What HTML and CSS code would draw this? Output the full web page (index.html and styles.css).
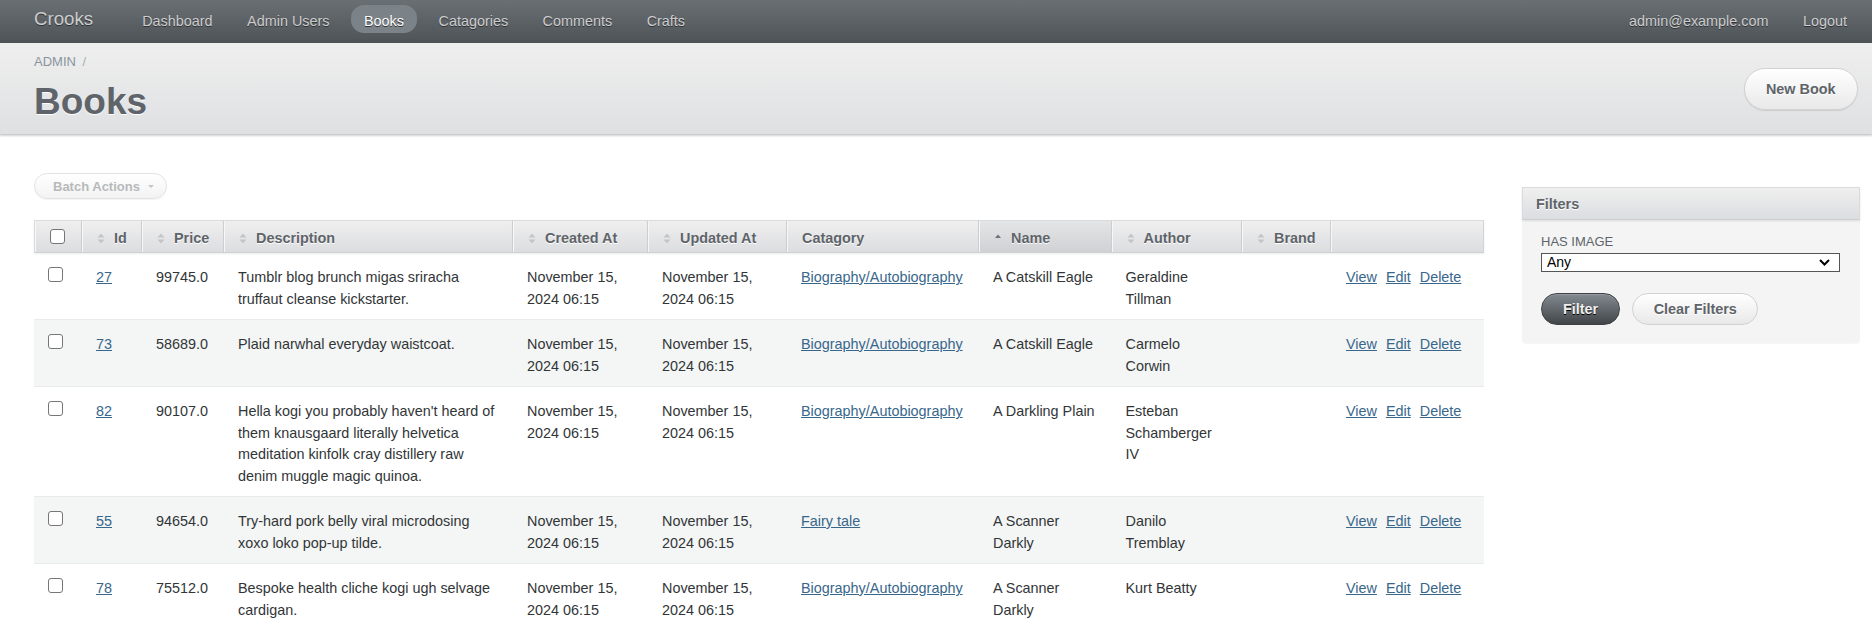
FILE: index.html
```html
<!DOCTYPE html>
<html lang="en">
<head>
<meta charset="utf-8">
<title>Books | Crooks</title>
<link rel="stylesheet" href="styles.css">
</head>
<body>
<div class="header">
  <h1 class="site-title">Crooks</h1>
  <ul class="tabs">
    <li><a href="#">Dashboard</a></li>
    <li><a href="#">Admin Users</a></li>
    <li><a href="#" class="current">Books</a></li>
    <li><a href="#">Catagories</a></li>
    <li><a href="#">Comments</a></li>
    <li><a href="#">Crafts</a></li>
  </ul>
  <ul class="tabs utility">
    <li><a href="#">admin@example.com</a></li>
    <li><a href="#">Logout</a></li>
  </ul>
</div>

<div class="title-bar">
  <div class="titles">
    <div class="breadcrumb">ADMIN <span class="sep">/</span></div>
    <h2 class="page-title">Books</h2>
  </div>
  <a href="#" class="btn new-btn">New Book</a>
</div>

<div class="content">
  <div class="main">
    <div class="batch">Batch Actions <span class="caret"></span></div>
    <table class="index-table">
      <colgroup>
        <col style="width:48px"><col style="width:60px"><col style="width:82px"><col style="width:289px"><col style="width:135px"><col style="width:139px"><col style="width:192px"><col style="width:132.5px"><col style="width:130.5px"><col style="width:89px"><col style="width:153px">
      </colgroup>
      <thead>
        <tr>
          <th class="col-cb"><span class="cb"></span></th>
          <th><span class="sort"><svg width="8" height="11" viewBox="0 0 8 11"><path d="M0.5 4.5 L4 0.5 L7.5 4.5Z M0.5 6.5 L4 10.5 L7.5 6.5Z"/></svg></span>Id</th>
          <th><span class="sort"><svg width="8" height="11" viewBox="0 0 8 11"><path d="M0.5 4.5 L4 0.5 L7.5 4.5Z M0.5 6.5 L4 10.5 L7.5 6.5Z"/></svg></span>Price</th>
          <th><span class="sort"><svg width="8" height="11" viewBox="0 0 8 11"><path d="M0.5 4.5 L4 0.5 L7.5 4.5Z M0.5 6.5 L4 10.5 L7.5 6.5Z"/></svg></span>Description</th>
          <th><span class="sort"><svg width="8" height="11" viewBox="0 0 8 11"><path d="M0.5 4.5 L4 0.5 L7.5 4.5Z M0.5 6.5 L4 10.5 L7.5 6.5Z"/></svg></span>Created At</th>
          <th><span class="sort"><svg width="8" height="11" viewBox="0 0 8 11"><path d="M0.5 4.5 L4 0.5 L7.5 4.5Z M0.5 6.5 L4 10.5 L7.5 6.5Z"/></svg></span>Updated At</th>
          <th>Catagory</th>
          <th class="sorted"><span class="sort asc"><svg width="8" height="11" viewBox="0 0 8 11"><path d="M1 5 L4 1.5 L7 5Z"/></svg></span>Name</th>
          <th><span class="sort"><svg width="8" height="11" viewBox="0 0 8 11"><path d="M0.5 4.5 L4 0.5 L7.5 4.5Z M0.5 6.5 L4 10.5 L7.5 6.5Z"/></svg></span>Author</th>
          <th><span class="sort"><svg width="8" height="11" viewBox="0 0 8 11"><path d="M0.5 4.5 L4 0.5 L7.5 4.5Z M0.5 6.5 L4 10.5 L7.5 6.5Z"/></svg></span>Brand</th>
          <th></th>
        </tr>
      </thead>
      <tbody>
        <tr class="odd">
          <td><span class="cb row-cb"></span></td>
          <td><a href="#">27</a></td>
          <td>99745.0</td>
          <td>Tumblr blog brunch migas sriracha truffaut cleanse kickstarter.</td>
          <td>November 15, 2024 06:15</td>
          <td>November 15, 2024 06:15</td>
          <td><a href="#" class="nowrap">Biography/Autobiography</a></td>
          <td>A Catskill Eagle</td>
          <td>Geraldine Tillman</td>
          <td></td>
          <td><div class="actions"><a href="#">View</a><a href="#">Edit</a><a href="#">Delete</a></div></td>
        </tr>
        <tr class="even">
          <td><span class="cb row-cb"></span></td>
          <td><a href="#">73</a></td>
          <td>58689.0</td>
          <td>Plaid narwhal everyday waistcoat.</td>
          <td>November 15, 2024 06:15</td>
          <td>November 15, 2024 06:15</td>
          <td><a href="#" class="nowrap">Biography/Autobiography</a></td>
          <td>A Catskill Eagle</td>
          <td>Carmelo Corwin</td>
          <td></td>
          <td><div class="actions"><a href="#">View</a><a href="#">Edit</a><a href="#">Delete</a></div></td>
        </tr>
        <tr class="odd">
          <td><span class="cb row-cb"></span></td>
          <td><a href="#">82</a></td>
          <td>90107.0</td>
          <td>Hella kogi you probably haven't heard of them knausgaard literally helvetica meditation kinfolk cray distillery raw denim muggle magic quinoa.</td>
          <td>November 15, 2024 06:15</td>
          <td>November 15, 2024 06:15</td>
          <td><a href="#" class="nowrap">Biography/Autobiography</a></td>
          <td>A Darkling Plain</td>
          <td>Esteban Schamberger IV</td>
          <td></td>
          <td><div class="actions"><a href="#">View</a><a href="#">Edit</a><a href="#">Delete</a></div></td>
        </tr>
        <tr class="even">
          <td><span class="cb row-cb"></span></td>
          <td><a href="#">55</a></td>
          <td>94654.0</td>
          <td>Try-hard pork belly viral microdosing xoxo loko pop-up tilde.</td>
          <td>November 15, 2024 06:15</td>
          <td>November 15, 2024 06:15</td>
          <td><a href="#" class="nowrap">Fairy tale</a></td>
          <td>A Scanner Darkly</td>
          <td>Danilo Tremblay</td>
          <td></td>
          <td><div class="actions"><a href="#">View</a><a href="#">Edit</a><a href="#">Delete</a></div></td>
        </tr>
        <tr class="odd">
          <td><span class="cb row-cb"></span></td>
          <td><a href="#">78</a></td>
          <td>75512.0</td>
          <td>Bespoke health cliche kogi ugh selvage cardigan.</td>
          <td>November 15, 2024 06:15</td>
          <td>November 15, 2024 06:15</td>
          <td><a href="#" class="nowrap">Biography/Autobiography</a></td>
          <td>A Scanner Darkly</td>
          <td>Kurt Beatty</td>
          <td></td>
          <td><div class="actions"><a href="#">View</a><a href="#">Edit</a><a href="#">Delete</a></div></td>
        </tr>
      </tbody>
    </table>
  </div>

  <aside class="sidebar">
    <div class="panel">
      <h3 class="panel-title">Filters</h3>
      <div class="panel-body">
        <label class="filter-label">Has Image</label>
        <div class="select-wrap">
          <select class="select"><option>Any</option></select>
          <svg class="chev" width="11" height="7" viewBox="0 0 11 7"><path d="M1 1 L5.5 5.5 L10 1" fill="none" stroke="#000" stroke-width="2"/></svg>
        </div>
        <div class="buttons">
          <a href="#" class="btn dark-btn">Filter</a>
          <a href="#" class="btn clear-btn">Clear Filters</a>
        </div>
      </div>
    </div>
  </aside>
</div>
</body>
</html>
```

FILE: styles.css
```css
* { box-sizing: border-box; }

html, body {
  margin: 0;
  padding: 0;
}

body {
  font-family: "Liberation Sans", Arial, Helvetica, sans-serif;
  font-size: 14.4px;
  color: #323537;
  background: #ffffff;
}

a { color: #38678b; }

/* ---------- header ---------- */
.header {
  height: 43px;
  display: flex;
  align-items: flex-start;
  padding: 0 12px 0 34px;
  background: linear-gradient(180deg, #6a6f74 0%, #4e5357 100%);
}

.site-title {
  margin: 0 36px 0 0;
  padding-top: 8px;
  font-size: 18.7px;
  line-height: 22px;
  font-weight: normal;
  color: #cdcdcd;
  text-shadow: 0 1px 0 #2f3235;
}

.tabs {
  list-style: none;
  margin: 5px 0 0 0;
  padding: 0;
  display: flex;
  gap: 8.5px;
}

.tabs a {
  display: block;
  height: 28px;
  padding: 5px 13px 0;
  line-height: 23px;
  color: #cdcdcd;
  text-decoration: none;
  border-radius: 13px;
  text-shadow: 0 1px 0 #2f3235;
}

.tabs a.current {
  background: #7b8288;
  color: #ffffff;
}

.utility { margin-left: auto; }

/* ---------- title bar ---------- */
.title-bar {
  height: 92px;
  display: flex;
  align-items: flex-start;
  justify-content: space-between;
  padding: 9.5px 14.5px 0 34px;
  background: linear-gradient(180deg, #efefef 0%, #dfe0e2 100%);
  border-bottom: 1px solid #cdcdcd;
  box-shadow: 0 1px 2px rgba(0, 0, 0, 0.18);
}

.breadcrumb {
  font-size: 13px;
  line-height: 18px;
  color: #8a949e;
}

.breadcrumb .sep { margin-left: 3px; color: #a5adb5; }

.page-title {
  margin: 9.5px 0 0 0;
  font-size: 37px;
  line-height: 44px;
  font-weight: bold;
  color: #5e6469;
  text-shadow: 0 1px 0 #ffffff;
}

.btn {
  display: inline-block;
  text-decoration: none;
  font-weight: bold;
  font-size: 14.4px;
  white-space: nowrap;
}

.new-btn {
  margin-top: 15.5px;
  height: 42px;
  padding: 0 21px;
  line-height: 40px;
  border-radius: 21px;
  color: #5e6469;
  border: 1px solid #d2d2d2;
  background: linear-gradient(180deg, #ffffff 0%, #e9e9e9 100%);
  box-shadow: 0 1px 1px rgba(0, 0, 0, 0.1);
  text-shadow: 0 1px 0 #ffffff;
}

/* ---------- content ---------- */
.content {
  display: flex;
  align-items: flex-start;
  padding: 38px 12px 0 34px;
}

.main { flex: 0 0 1450px; }

.batch {
  display: inline-flex;
  align-items: center;
  height: 26px;
  padding: 0 12px 0 18px;
  border: 1px solid #e3e3e3;
  border-radius: 13px;
  background: linear-gradient(180deg, #ffffff 0%, #f3f3f3 100%);
  box-shadow: 0 1px 1px rgba(0, 0, 0, 0.05);
  font-size: 13px;
  font-weight: bold;
  color: #b7b9bb;
  margin-bottom: 21px;
}

.caret {
  display: inline-block;
  width: 0;
  height: 0;
  margin-left: 8px;
  border-left: 3px solid transparent;
  border-right: 3px solid transparent;
  border-top: 3px solid #c4c6c8;
}

/* ---------- table ---------- */
.index-table {
  width: 1450px;
  table-layout: fixed;
  border-collapse: separate;
  border-spacing: 0;
}

.index-table th {
  height: 33px;
  padding: 2px 15px 0;
  text-align: left;
  font-weight: bold;
  color: #5e6469;
  white-space: nowrap;
  text-shadow: 0 1px 0 #ffffff;
  background: linear-gradient(180deg, #efefef 0%, #dcdde0 100%);
  border-top: 1px solid #dadbdc;
  border-bottom: 1px solid #cfd0d2;
  border-right: 1px solid #d2d3d5;
  box-shadow: inset 1px 0 0 #f7f7f7, 0 1px 2px rgba(0, 0, 0, 0.08);
}

.index-table th:first-child { border-left: 1px solid #dadbdc; }

.index-table th.sorted {
  background: linear-gradient(180deg, #e4e5e6 0%, #d0d1d4 100%);
}

.sort {
  display: inline-block;
  width: 8px;
  margin-right: 9px;
  vertical-align: -1px;
}

.sort svg { display: block; fill: #c3c5c7; }
.sort.asc svg { fill: #6e7378; }

.cb {
  display: block;
  width: 15px;
  height: 15px;
  border: 1px solid #767676;
  border-radius: 3px;
  background: #ffffff;
}

.col-cb .cb { margin-top: -2px; }
.row-cb { margin-top: 0; }

.index-table td {
  padding: 14px 14px 9px;
  line-height: 21.5px;
  vertical-align: top;
  border-bottom: 1px solid #e9eaeb;
}

.index-table tr.even td { background: #f4f5f5; }

.nowrap { white-space: nowrap; }

.actions {
  display: flex;
  gap: 9px;
  white-space: nowrap;
  padding-left: 1px;
}

/* ---------- sidebar ---------- */
.sidebar {
  flex: 0 0 338px;
  margin-left: 38px;
  margin-top: 14px;
}

.panel {
  background: #f4f4f4;
  border-radius: 0 0 4px 4px;
  box-shadow: 0 1px 1px rgba(0, 0, 0, 0.04);
}

.panel-title {
  margin: 0;
  height: 33px;
  padding: 0 13px;
  line-height: 32px;
  font-size: 14.4px;
  font-weight: bold;
  color: #5e6469;
  text-shadow: 0 1px 0 #ffffff;
  background: linear-gradient(180deg, #efefef 0%, #dcdde0 100%);
  border: 1px solid #dadbdc;
  border-bottom-color: #cdcecf;
  box-shadow: 0 1px 2px rgba(0, 0, 0, 0.1);
}

.panel-body {
  padding: 14px 20px 18px 19px;
}

.filter-label {
  display: block;
  font-size: 13px;
  line-height: 16px;
  text-transform: uppercase;
  color: #5e6469;
  margin-bottom: 3px;
}

.select-wrap {
  position: relative;
  height: 19px;
}

.select {
  display: block;
  width: 299px;
  height: 19px;
  margin: 0;
  padding: 0 0 0 5px;
  appearance: none;
  -webkit-appearance: none;
  border: 1px solid #555555;
  border-radius: 0;
  background: #ffffff;
  font-family: "Liberation Sans", Arial, sans-serif;
  font-size: 14px;
  line-height: 17px;
  color: #000000;
}

.chev {
  position: absolute;
  right: 10px;
  top: 6px;
}

.buttons {
  display: flex;
  gap: 12px;
  margin-top: 21px;
}

.dark-btn,
.clear-btn {
  height: 32px;
  line-height: 30px;
  border-radius: 16px;
}

.dark-btn {
  padding: 0 21px;
  color: #efefef;
  border: 1px solid #3d4144;
  background: linear-gradient(180deg, #838a90 0%, #414549 100%);
  text-shadow: 0 1px 0 #000000;
  box-shadow: inset 0 1px 0 rgba(255, 255, 255, 0.15);
}

.clear-btn {
  padding: 0 20.5px;
  color: #5e6469;
  border: 1px solid #d2d2d2;
  background: linear-gradient(180deg, #ffffff 0%, #e8e8e8 100%);
  text-shadow: 0 1px 0 #ffffff;
}
```
